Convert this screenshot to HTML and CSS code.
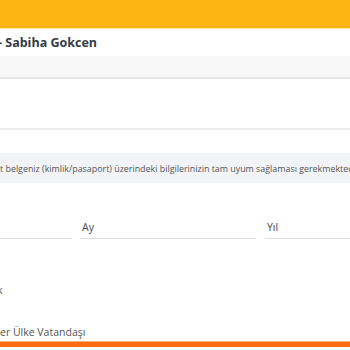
FILE: index.html
```html
<!DOCTYPE html>
<html lang="tr">
<head>
    <meta charset="UTF-8">
    <title>Yolcu Bilgileri</title>
    <link rel="stylesheet" href="styles.css">
</head>
<body>
<div class="top-bar"></div>
<div class="flight-title"><span class="cut-title">- Sabiha Gokcen</span></div>
<div class="sub-band"></div>
<div class="blank-row"></div>
<div class="notice"><span class="cut-notice">t belgeniz (kimlik/pasaport) üzerindeki bilgilerinizin tam uyum sağlaması gerekmektedir.</span></div>
<div class="birth">
    <div class="field field-day"></div>
    <div class="field field-month"><span class="label">Ay</span></div>
    <div class="field field-year"><span class="label">Yıl</span></div>
</div>
<div class="gender">k</div>
<div class="citizen">er Ülke Vatandaşı</div>
<div class="bottom-bar"></div>
</body>
</html>
```

FILE: styles.css
```css
* {
    margin: 0;
    padding: 0;
    box-sizing: border-box;
}

html, body {
    width: 350px;
    height: 350px;
    overflow: hidden;
    background: #fff;
    font-family: "Open Sans", "Noto Sans", sans-serif;
    color: #444;
}

.top-bar {
    height: 29px;
    background: #fbb615;
    border-bottom: 1px solid #fde6a8;
}

.flight-title {
    height: 27px;
    padding-top: 5px;
    font-size: 12.5px;
    font-weight: 700;
    color: #333a44;
    white-space: nowrap;
}

.cut-title {
    display: inline-block;
    margin-left: -2px;
}

.sub-band {
    height: 23px;
    background: #f8f8f8;
    border-bottom: 2px solid #e6e6e6;
}

.blank-row {
    height: 51px;
    border-bottom: 2px solid #ececec;
}

.notice {
    margin-top: 23px;
    height: 30px;
    background: #f2f4f7;
    font-size: 8.9px;
    line-height: 31px;
    color: #555;
    white-space: nowrap;
    overflow: hidden;
}

.birth {
    display: flex;
    margin-top: 36px;
    height: 20px;
}

.field {
    border-bottom: 1px solid #dcdcdc;
    font-size: 10.5px;
    line-height: 16px;
    color: #444;
}

.field-day {
    width: 72px;
}

.field-month {
    width: 176px;
    margin-left: 8px;
    padding-left: 2px;
}

.field-year {
    flex: 1;
    margin-left: 9px;
    padding-left: 2px;
}

.gender {
    margin-top: 44px;
    font-size: 10.5px;
    margin-left: -3px;
    color: #555;
}

.citizen {
    margin-top: 27px;
    font-size: 10.5px;
    line-height: 17px;
    color: #555;
}

.bottom-bar {
    height: 6px;
    background: #fd6b13;
    border-top: 1px solid #fcb27f;
}
```
